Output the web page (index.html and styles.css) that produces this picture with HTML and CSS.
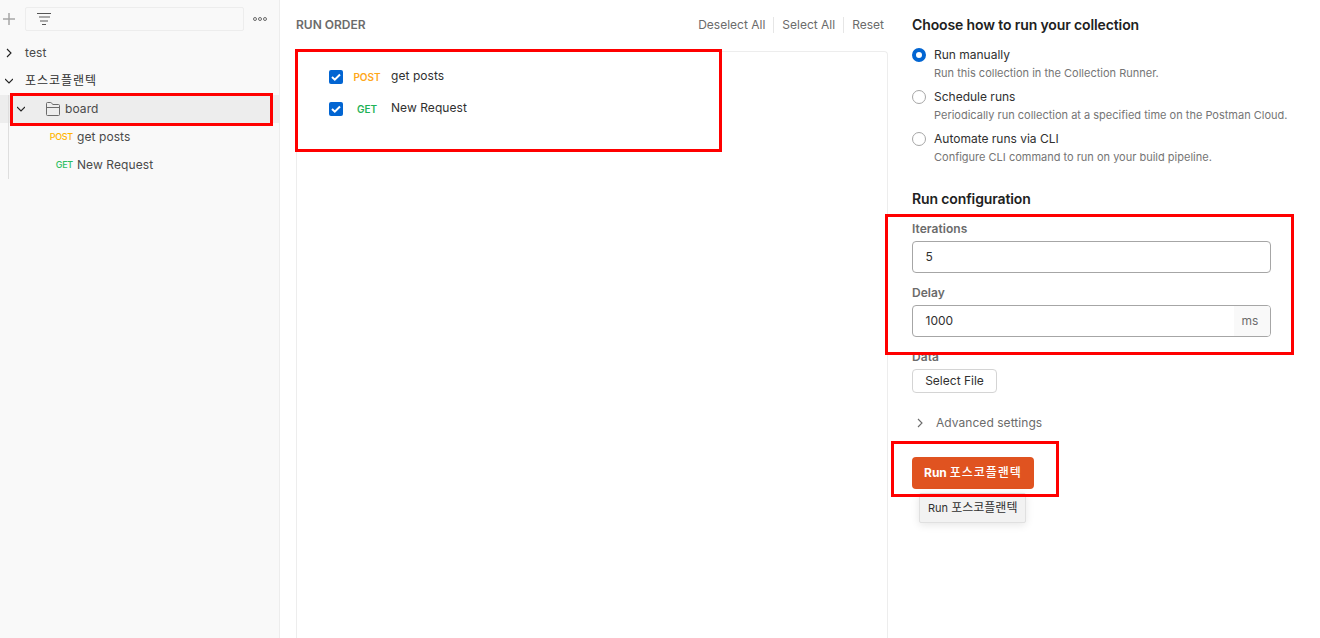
FILE: index.html
```
<!DOCTYPE html>
<html lang="en">
<head>
<meta charset="utf-8">
<title>Collection Runner</title>
<link rel="stylesheet" href="styles.css">
</head>
<body>
<div class="app">
  <aside class="sidebar">
    <div class="toolbar">
      <svg class="plus" width="12" height="12" viewBox="0 0 12 12"><path d="M6 0v12M0 6h12"/></svg>
      <div class="search">
        <svg width="14" height="12" viewBox="0 0 14 12"><path class="dark" d="M0 .5h14"/><path class="soft" d="M2 4h11M3 8h8"/><path class="dark" d="M5 11.500h4"/></svg>
      </div>
      <svg class="more" width="14" height="4" viewBox="0 0 14 4"><circle cx="2" cy="2" r="1.500"/><circle cx="7" cy="2" r="1.500"/><circle cx="12" cy="2" r="1.500"/></svg>
    </div>
    <div class="row">
      <svg class="chev" width="8" height="10" viewBox="0 0 8 10"><path d="M2 1l4 4-4 4"/></svg>
      <span class="row-text">test</span>
    </div>
    <div class="row">
      <svg class="chev" width="8" height="10" viewBox="0 0 8 10"><path d="M0 3l4 4 4-4"/></svg>
      <span class="collection-name">포스코플랜텍</span>
    </div>
    <div class="tree">
      <div class="row folder-row">
        <svg class="chev" width="8" height="10" viewBox="0 0 8 10"><path d="M0 3l4 4 4-4"/></svg>
        <svg class="folder" width="14" height="14" viewBox="0 0 14 14"><path d="M.5 12.500v-11q0-1 1-1h3.200q.6 0 1 .6l1 1.400h5.800q1 0 1 1v9q0 1-1 1h-11q-1 0-1-1zM.5 5.500h13"/></svg>
        <span class="row-text">board</span>
      </div>
      <div class="row req"><span class="tag post">POST</span><span class="row-text">get posts</span></div>
      <div class="row req"><span class="tag get">GET</span><span class="row-text">New Request</span></div>
    </div>
  </aside>

  <main class="order">
    <header class="order-head">
      <h2 class="order-title">RUN ORDER</h2>
      <div class="actions"><span>Deselect All</span><span>Select All</span><span>Reset</span></div>
    </header>
    <div class="list">
      <div class="item">
        <svg class="check" width="14" height="14" viewBox="0 0 14 14"><rect width="14" height="14" rx="2"/><path d="M3 7l2.800 2.700L11 4.500"/></svg>
        <span class="method m-post">POST</span><span class="name">get posts</span>
      </div>
      <div class="item">
        <svg class="check" width="14" height="14" viewBox="0 0 14 14"><rect width="14" height="14" rx="2"/><path d="M3 7l2.800 2.700L11 4.500"/></svg>
        <span class="method m-get">GET</span><span class="name">New Request</span>
      </div>
    </div>
  </main>

  <section class="config">
    <h3 class="heading">Choose how to run your collection</h3>
    <div class="option">
      <span class="radio on"></span>
      <div><div class="opt-title">Run manually</div><div class="opt-desc">Run this collection in the Collection Runner.</div></div>
    </div>
    <div class="option">
      <span class="radio"></span>
      <div><div class="opt-title">Schedule runs</div><div class="opt-desc">Periodically run collection at a specified time on the Postman Cloud.</div></div>
    </div>
    <div class="option">
      <span class="radio"></span>
      <div><div class="opt-title">Automate runs via CLI</div><div class="opt-desc">Configure CLI command to run on your build pipeline.</div></div>
    </div>
    <h3 class="heading second">Run configuration</h3>
    <div class="label">Iterations</div>
    <div class="input"><span class="value">5</span></div>
    <div class="label">Delay</div>
    <div class="input"><span class="value">1000</span><span class="unit">ms</span></div>
    <div class="label">Data</div>
    <div class="file-btn">Select File</div>
    <div class="advanced">
      <svg class="chev grey" width="8" height="10" viewBox="0 0 8 10"><path d="M2 1l4 4-4 4"/></svg>
      <span>Advanced settings</span>
    </div>
    <div class="run-wrap">
      <div class="run-btn">Run <span class="run-name">포스코플랜텍</span></div>
      <div class="tooltip">Run <span class="tip-name">포스코플랜텍</span></div>
    </div>
  </section>
</div>
<div class="mark mark-folder"></div>
<div class="mark mark-order"></div>
<div class="mark mark-fields"></div>
<div class="mark mark-run"></div>
</body>
</html>
```
FILE: styles.css
```
* { box-sizing: border-box; }
body {
  margin: 0;
  background: #fff;
  color: #303030;
  font: 12px/16px Inter, "Noto Sans CJK KR", sans-serif;
  overflow: hidden;
}
h2, h3 { margin: 0; }
svg { display: block; flex: none; fill: none; }
span, .label, .heading, .opt-title, .opt-desc { white-space: nowrap; }
.app { display: flex; height: 638px; position: relative; overflow: hidden; }

.sidebar { width: 280px; flex: none; background: #f9f9f9; border-right: 1px solid #ededed; color: #4a4a4a; }
.toolbar { display: flex; align-items: center; height: 39px; padding: 0 12px 1px 3px; }
.plus { stroke: #a6a6a6; stroke-width: 1.500; }
.search { width: 219px; height: 24px; margin: 0 9px 0 10px; padding: 5px 11px; border: 1px solid #ededed; border-radius: 2px; }
.dark { stroke: #555; }
.soft { stroke: #aaa; stroke-width: 2; }
.more { stroke: #6b6b6b; }
.row { display: flex; align-items: center; height: 28px; padding-left: 5px; }
.row-text { letter-spacing: .08px; }
.chev { stroke: #212121; stroke-width: 1.100; margin-right: 12px; }
.collection-name { color: #303030; letter-spacing: .95px; }
.tree { position: relative; }
.tree::before { content: ""; position: absolute; left: 8px; top: 0; width: 1px; height: 84px; background: #dedede; }
.folder-row { background: #ededed; padding-left: 17px; }
.folder-row .chev { margin-right: 21px; }
.folder { stroke: #6b6b6b; margin-right: 5px; }
.tag { width: 73px; margin-right: 4px; text-align: right; font-size: 9px; font-weight: 500; letter-spacing: -.25px; }
.req { padding-left: 0; }
.post { color: #ffb400; }
.get { color: #2cbe63; }

.order { width: 608px; flex: none; padding: 0 0 0 16px; display: flex; flex-direction: column; }
.order-head { display: flex; justify-content: space-between; align-items: center; height: 51px; padding: 0 4px 2px 0; color: #6b6b6b; }
.order-title { font-size: 12px; font-weight: 600; }
.actions { display: flex; }
.actions span + span { margin-left: 8px; padding-left: 8px; border-left: 1px solid #e6e6e6; }
.list { flex: 1; border: 1px solid #ededed; border-bottom: 0; border-radius: 4px 4px 0 0; padding: 9px 32px; }
.item { display: flex; align-items: center; height: 32px; }
.check { fill: #0265d2; }
.check path { fill: none; stroke: #fff; stroke-width: 2; }
.method { width: 48px; padding-bottom: 1px; text-align: center; font-size: 10px; font-weight: 600; }
.name { padding-bottom: 2px; letter-spacing: .06px; }
.m-post { color: #ffa71a; }
.m-get { color: #1fb257; }

.config { padding: 15px 0 0 24px; width: 432px; flex: none; }
.heading { color: #212121; font-size: 14px; line-height: 20px; font-weight: 600; letter-spacing: -.12px; margin-bottom: 12px; }
.option { display: flex; height: 42px; }
.radio { width: 14px; height: 14px; flex: none; margin: 1px 8px 0 0; border: 1px solid #a6a6a6; border-radius: 50%; }
.radio.on { border: 4px solid #0265d2; }
.opt-desc { font-size: 11px; line-height: 16px; margin-top: 2px; color: #757575; }
.second { margin: 16px 0 12px; }
.label { font-weight: 600; color: #6b6b6b; height: 20px; letter-spacing: .04px; }
.input { width: 359px; height: 32px; margin-bottom: 12px; border: 1px solid #a6a6a6; border-radius: 4px; display: flex; justify-content: space-between; line-height: 30px; overflow: hidden; }
.value { padding-left: 12.500px; }
.unit { width: 36px; background: #f9f9f9; padding-left: 7.500px; color: #6b6b6b; }
.file-btn { width: 85px; height: 24px; border: 1px solid #d4d4d4; border-radius: 4px; line-height: 22px; text-align: center; }
.advanced { display: flex; align-items: center; height: 16px; margin: 22px 0 26px 4px; color: #6b6b6b; letter-spacing: .05px; }
.grey { stroke: #6b6b6b; }
.run-wrap { position: relative; }
.run-btn { width: 122px; height: 32px; padding-left: 12px; background: #e05320; border-radius: 4px; color: #fff; font-weight: 700; line-height: 32px; white-space: nowrap; }
.run-name { font-weight: 500; letter-spacing: 1px; }
.tooltip { position: absolute; left: 7px; top: 36px; width: 107px; height: 30px; padding-left: 8px; border: 1px solid #e0e0e0; border-radius: 2px; background: #f2f2f2; box-shadow: 0 2px 8px rgba(0,0,0,.1); font-size: 11px; line-height: 28px; white-space: nowrap; }
.tip-name { font-size: 12px; }

.mark { position: absolute; border: 3px solid #f00; }
.mark-folder { left: 10px; top: 93px; width: 263px; height: 33px; }
.mark-order { left: 295px; top: 49px; width: 427px; height: 103px; }
.mark-fields { left: 885px; top: 214px; width: 409px; height: 141px; }
.mark-run { left: 891px; top: 441px; width: 168px; height: 56px; }
```
